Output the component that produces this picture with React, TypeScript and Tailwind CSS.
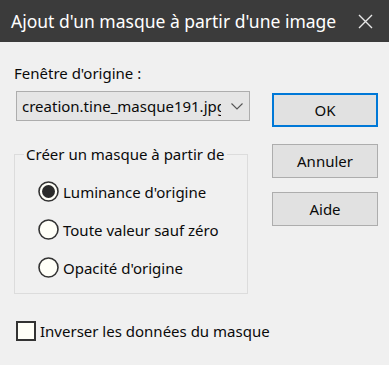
const Radio = ({ checked, label }: { checked?: boolean; label: string }) => {
    return (
        <div className="flex items-center h-[21px]">
            <svg width="21" height="21" viewBox="0 0 21 21" className="shrink-0">
                <circle cx="10.5" cy="10.5" r="9.5" fill="#fffff8" stroke="#333" strokeWidth="1.6" />
                {checked && <circle cx="10.5" cy="10.5" r="6.5" fill="#2b2b2b" />}
            </svg>
            <span className="ml-[4px] leading-[20px] whitespace-nowrap">{label}</span>
        </div>
    );
};

const Button = ({ label, primary }: { label: string; primary?: boolean }) => {
    return (
        <div
            className={
                primary
                    ? "h-[34px] w-[106px] flex items-center justify-center bg-[#e1e1e1] border-2 border-[#0078d7]"
                    : "h-[34px] w-[106px] flex items-center justify-center bg-[#e1e1e1] border border-[#adadad]"
            }
        >
            {label}
        </div>
    );
};

export default function App() {
    return (
        <div className="w-[389px] h-[365px] bg-[#f0f0f0] font-['Noto_Sans',sans-serif] text-[15px] text-[#0a0a0a] overflow-hidden">
            <div className="h-[42px] bg-[#3b3b3b] flex items-center justify-between pl-[11px] pr-[16px] text-white text-[17.5px]">
                <span className="leading-[28px] whitespace-nowrap">Ajout d'un masque à partir d'une image</span>
                <svg width="15" height="15" viewBox="0 0 15 15" className="shrink-0">
                    <path d="M1 1 L14 14 M14 1 L1 14" stroke="#e8e8e8" strokeWidth="1.4" />
                </svg>
            </div>
            <div className="flex">
                <div className="w-[236px] ml-[14px] pt-[21px]">
                    <div className="leading-[20px]">Fenêtre d'origine :</div>
                    <div className="mt-[8px] ml-[2px] h-[30px] w-[234px] bg-[#e5e5e5] border border-[#adadad] flex items-center pl-[5px] pr-[6px]">
                        <span className="flex-1 overflow-hidden whitespace-nowrap">creation.tine_masque191.jpg</span>
                        <svg width="12" height="7" viewBox="0 0 12 7" className="ml-[10px] shrink-0">
                            <path d="M0.5 0.5 L6 6 L11.5 0.5" stroke="#555" strokeWidth="1.1" fill="none" />
                        </svg>
                    </div>
                    <fieldset className="mt-[23px] h-[150px] w-[234px] border border-[#dcdcdc] pt-[17px]">
                        <legend className="ml-[9px] px-[2px] leading-[20px] whitespace-nowrap">Créer un masque à partir de</legend>
                        <div className="ml-[23px] flex flex-col gap-[17px]">
                            <Radio checked label="Luminance d'origine" />
                            <Radio label="Toute valeur sauf zéro" />
                            <Radio label="Opacité d'origine" />
                        </div>
                    </fieldset>
                    <div className="mt-[27px] ml-[2px] flex items-center">
                        <div className="w-[20px] h-[20px] shrink-0 border-2 border-[#333] bg-[#fffff8]" />
                        <span className="ml-[4px] leading-[20px] whitespace-nowrap">Inverser les données du masque</span>
                    </div>
                </div>
                <div className="ml-[22px] pt-[51px] flex flex-col">
                    <Button primary label="OK" />
                    <div className="mt-[17px]">
                        <Button label="Annuler" />
                    </div>
                    <div className="mt-[14px]">
                        <Button label="Aide" />
                    </div>
                </div>
            </div>
        </div>
    );
}
